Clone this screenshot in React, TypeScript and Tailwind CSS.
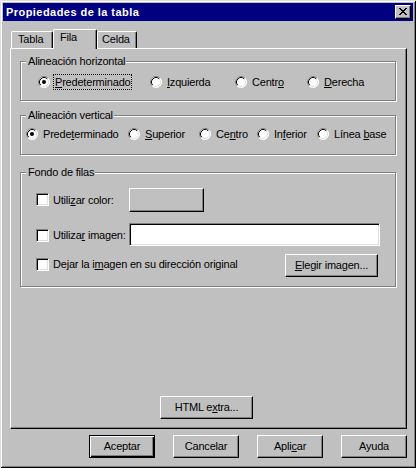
import React from "react";

const raised =
  "border-t border-l border-t-white border-l-white border-r border-b border-r-black border-b-black shadow-[inset_-1px_-1px_0_#808080]";
const sunken =
  "border border-t-[#808080] border-l-[#808080] border-b-white border-r-white shadow-[inset_1px_1px_0_#000,inset_-1px_-1px_0_#dfdfdf] bg-white";

function Radio({ checked }: { checked?: boolean }) {
  return (
    <svg width="12" height="12" viewBox="0 0 12 12" className="block shrink-0">
      <circle cx="6" cy="6" r="5.5" fill="#fff" />
      <path d="M2.11 9.89 A5.5 5.5 0 0 1 9.89 2.11" fill="none" stroke="#808080" strokeWidth="1" />
      <path d="M9.89 2.11 A5.5 5.5 0 0 1 2.11 9.89" fill="none" stroke="#ffffff" strokeWidth="1" />
      <path d="M2.82 9.18 A4.5 4.5 0 0 1 9.18 2.82" fill="none" stroke="#000" strokeWidth="1" />
      <path d="M9.18 2.82 A4.5 4.5 0 0 1 2.82 9.18" fill="none" stroke="#dfdfdf" strokeWidth="1" />
      {checked && <circle cx="6" cy="6" r="2" fill="#000" />}
    </svg>
  );
}

function RadioItem({
  checked,
  focus,
  className,
  children,
}: {
  checked?: boolean;
  focus?: boolean;
  className?: string;
  children: React.ReactNode;
}) {
  return (
    <div className={"flex items-center h-[16px] shrink-0 " + (className ?? "")}>
      <Radio checked={checked} />
      <span
        className={
          "ml-[3px] px-[1px] leading-[14px] whitespace-nowrap border " +
          (focus ? "border-dotted border-black" : "border-transparent")
        }
      >
        {children}
      </span>
    </div>
  );
}

function Checkbox() {
  return <div className={"w-[13px] h-[13px] shrink-0 " + sunken} />;
}

function Group({
  label,
  className,
  children,
}: {
  label: string;
  className?: string;
  children?: React.ReactNode;
}) {
  return (
    <div
      className={
        "relative border border-[#808080] shadow-[inset_1px_1px_0_#fff,1px_1px_0_#fff] shrink-0 " +
        (className ?? "")
      }
    >
      <span className="absolute -top-[7px] left-[5px] pl-[2px] pr-[1px] bg-[#c0c0c0] leading-[13px] whitespace-nowrap">
        {label}
      </span>
      {children}
    </div>
  );
}

function Button({
  className,
  children,
  isDefault,
}: {
  className?: string;
  children: React.ReactNode;
  isDefault?: boolean;
}) {
  if (isDefault) {
    return (
      <div
        className={
          "flex items-center justify-center shrink-0 border border-black shadow-[inset_1px_1px_0_#fff,inset_-1px_-1px_0_#000,inset_-2px_-2px_0_#808080] " +
          (className ?? "")
        }
      >
        {children}
      </div>
    );
  }
  return (
    <div className={"flex items-center justify-center shrink-0 " + raised + " " + (className ?? "")}>
      {children}
    </div>
  );
}

function Tab({
  selected,
  className,
  children,
}: {
  selected?: boolean;
  className?: string;
  children: React.ReactNode;
}) {
  return (
    <div
      className={
        "border-t border-l border-t-white border-l-white border-r border-r-black shadow-[inset_-1px_0_0_#808080] rounded-tl-[2px] rounded-tr-[2px] bg-[#c0c0c0] shrink-0 pt-[1px] " +
        (selected ? "h-[20px] -mb-[1px] relative z-10 " : "h-[17px] ") +
        (className ?? "")
      }
    >
      {children}
    </div>
  );
}

export default function App() {
  return (
    <div className="w-[416px] h-[468px] bg-[#c0c0c0] flex flex-col p-[3px] overflow-hidden shadow-[inset_1px_1px_0_#dfdfdf,inset_-1px_-1px_0_#000,inset_2px_2px_0_#fff,inset_-2px_-2px_0_#808080] font-['Liberation_Sans',Arial,sans-serif] text-[11px] leading-[13px] tracking-[-0.2px] text-black">
      {/* Title bar */}
      <div className="h-[18px] bg-[#000080] flex items-center justify-between pl-[3px] pr-[2px] shrink-0">
        <span className="text-white font-bold tracking-[0.45px] pt-[1px] whitespace-nowrap">
          Propiedades de la tabla
        </span>
        <div className={"w-[16px] h-[14px] bg-[#c0c0c0] pl-[3px] pt-[2px] " + raised}>
          <svg width="8" height="7" viewBox="0 0 8 7" shapeRendering="crispEdges" className="block">
            <rect x="0" y="0" width="2" height="1" fill="#000" />
            <rect x="6" y="0" width="2" height="1" fill="#000" />
            <rect x="1" y="1" width="2" height="1" fill="#000" />
            <rect x="5" y="1" width="2" height="1" fill="#000" />
            <rect x="2" y="2" width="4" height="1" fill="#000" />
            <rect x="3" y="3" width="2" height="1" fill="#000" />
            <rect x="2" y="4" width="4" height="1" fill="#000" />
            <rect x="1" y="5" width="2" height="1" fill="#000" />
            <rect x="5" y="5" width="2" height="1" fill="#000" />
            <rect x="0" y="6" width="2" height="1" fill="#000" />
            <rect x="6" y="6" width="2" height="1" fill="#000" />
          </svg>
        </div>
      </div>

      {/* Tabs */}
      <div className="mt-[8px] ml-[7px] mr-[6px] flex flex-col shrink-0">
        <div className="h-[19px] flex items-end pl-[1px]">
          <Tab className="w-[42px] pl-[6px]">Tabla</Tab>
          <Tab selected className="w-[44px] pl-[6px]">
            Fila
          </Tab>
          <Tab className="w-[40px] pl-[4px]">Celda</Tab>
        </div>
        <div
          className={
            "h-[381px] pt-[12px] pl-[9px] pr-[10px] flex flex-col border-t border-l border-t-white border-l-white border-r border-b border-r-black border-b-black shadow-[inset_-1px_-1px_0_#808080]"
          }
        >
          <Group label="Alineación horizontal" className="h-[40px] pt-[12px] pl-[17px]">
            <div className="flex">
              <RadioItem checked focus className="w-[112px]">
                <u>P</u>redeterminado
              </RadioItem>
              <RadioItem className="w-[85px]">
                <u>I</u>zquierda
              </RadioItem>
              <RadioItem className="w-[72px]">
                Centr<u>o</u>
              </RadioItem>
              <RadioItem>
                <u>D</u>erecha
              </RadioItem>
            </div>
          </Group>

          <Group label="Alineación vertical" className="mt-[14px] h-[40px] pt-[10px] pl-[5px]">
            <div className="flex">
              <RadioItem checked className="w-[102px]">
                Prede<u>t</u>erminado
              </RadioItem>
              <RadioItem className="w-[71px]">
                <u>S</u>uperior
              </RadioItem>
              <RadioItem className="w-[58px]">
                Ce<u>n</u>tro
              </RadioItem>
              <RadioItem className="w-[60px]">
                In<u>f</u>erior
              </RadioItem>
              <RadioItem>
                Línea <u>b</u>ase
              </RadioItem>
            </div>
          </Group>

          <Group label="Fondo de filas" className="mt-[17px] h-[115px] pt-[15px] pl-[15px] pr-[17px]">
            <div className="flex h-[24px]">
              <div className="w-[93px] flex items-start shrink-0">
                <div className="mt-[5px]">
                  <Checkbox />
                </div>
                <span className="ml-[4px] mt-[6px] whitespace-nowrap">
                  Utili<u>z</u>ar color:
                </span>
              </div>
              <Button className="w-[75px] h-[24px]">{""}</Button>
            </div>
            <div className="flex h-[23px] mt-[11px]">
              <div className="w-[93px] flex items-start shrink-0">
                <div className="mt-[6px]">
                  <Checkbox />
                </div>
                <span className="ml-[4px] mt-[6px] whitespace-nowrap">
                  Utiliza<u>r</u> imagen:
                </span>
              </div>
              <div className={"w-[251px] h-[23px] shrink-0 " + sunken} />
            </div>
            <div className="flex h-[23px] mt-[8px]">
              <div className="flex items-start">
                <div className="mt-[4px]">
                  <Checkbox />
                </div>
                <span className="ml-[4px] mt-[4px] whitespace-nowrap">
                  Dejar la i<u>m</u>agen en su dirección original
                </span>
              </div>
              <Button className="ml-auto w-[93px] h-[23px]">
                <span>
                  <u>E</u>legir imagen...
                </span>
              </Button>
            </div>
          </Group>

          <Button className="mt-[109px] ml-[140px] w-[93px] h-[23px]">
            <span>
              HTML e<u>x</u>tra...
            </span>
          </Button>
        </div>
      </div>

      {/* Bottom buttons */}
      <div className="mt-[6px] mr-[6px] flex justify-end gap-[18px] shrink-0">
        <Button isDefault className="w-[66px] h-[23px]">
          Aceptar
        </Button>
        <Button className="w-[66px] h-[23px]">Cancelar</Button>
        <Button className="w-[66px] h-[23px]">
          <span>
            Apli<u>c</u>ar
          </span>
        </Button>
        <Button className="w-[66px] h-[23px]">Ayuda</Button>
      </div>
    </div>
  );
}
